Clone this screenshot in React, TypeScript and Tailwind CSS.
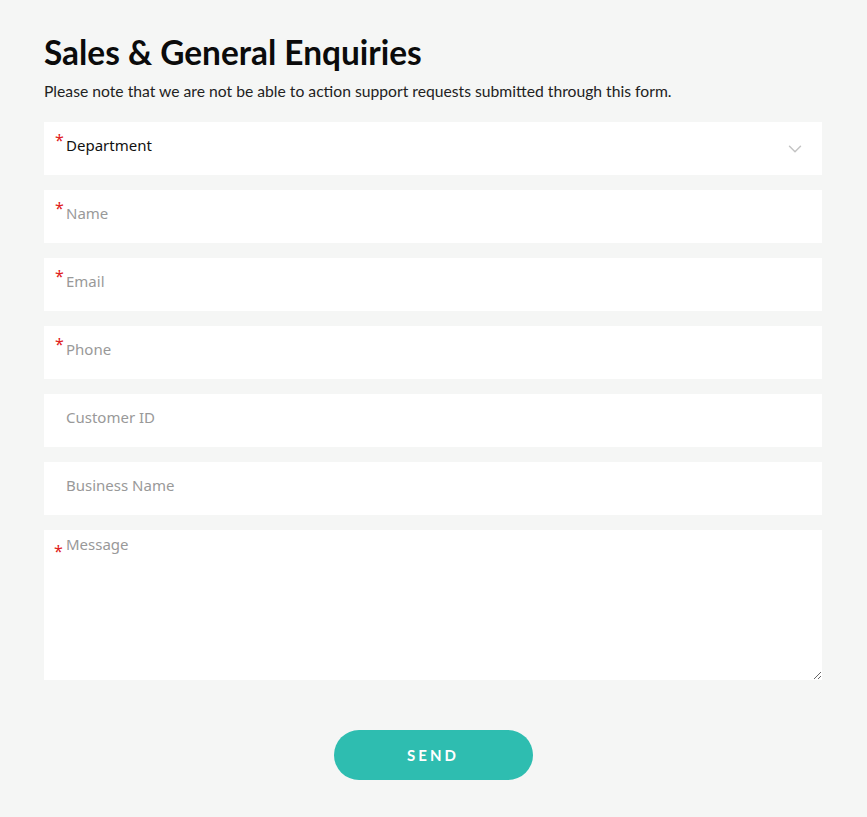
import { ChevronDown } from 'lucide-react'

const FIELDS = [
  { label: 'Name', required: true },
  { label: 'Email', required: true },
  { label: 'Phone', required: true },
  { label: 'Customer ID', required: false },
  { label: 'Business Name', required: false },
]

const fieldFont = { fontFamily: '"Noto Sans", "Open Sans", sans-serif' }

export default function App() {
  return (
    <div className="min-h-[817px] bg-[#f5f6f5] px-[44px] pt-[33px]" style={{ fontFamily: 'Lato, "Noto Sans", sans-serif' }}>
      <h1 className="text-[33.4px] font-bold leading-[38px] text-[#0b0b0b]">Sales &amp; General Enquiries</h1>
      <p className="mt-[10px] text-[15.7px] leading-[20px] text-[#222]">
        Please note that we are not be able to action support requests submitted through this form.
      </p>

      <div className="mt-[21px] flex w-[778px] flex-col gap-[15px]">
        <div className="relative flex h-[53px] items-start bg-white pl-[22px] pt-[13px]">
          <span className="absolute left-[11px] top-[10px] text-[16px] leading-none text-[#e02020]" style={fieldFont}>*</span>
          <span className="text-[15px] leading-[20px] text-[#111]" style={fieldFont}>Department</span>
          <ChevronDown className="absolute right-[16px] top-[16px] text-[#c4c4c4]" size={22} strokeWidth={1.6} />
        </div>

        {FIELDS.map(f => (
          <div key={f.label} className="relative flex h-[53px] items-start bg-white pl-[22px] pt-[13px]">
            {f.required && (
              <span className="absolute left-[11px] top-[10px] text-[16px] leading-none text-[#e02020]" style={fieldFont}>*</span>
            )}
            <span className="text-[15px] leading-[20px] text-[#999]" style={fieldFont}>{f.label}</span>
          </div>
        ))}

        <div className="relative bg-white">
          <span className="absolute left-[10px] top-[13px] text-[16px] leading-none text-[#e02020]" style={fieldFont}>*</span>
          <textarea
            placeholder="Message"
            className="block h-[150px] w-full resize-y bg-white pl-[22px] pt-[4px] text-[15px] leading-[20px] text-[#111] placeholder:text-[#999] focus:outline-none"
            style={fieldFont}
          />
        </div>
      </div>

      <div className="flex w-[778px] justify-center pt-[50px]">
        <button className="h-[50px] w-[199px] rounded-full bg-[#2ebdb0] text-[15px] font-bold tracking-[0.2em] text-white">
          SEND
        </button>
      </div>
    </div>
  )
}
